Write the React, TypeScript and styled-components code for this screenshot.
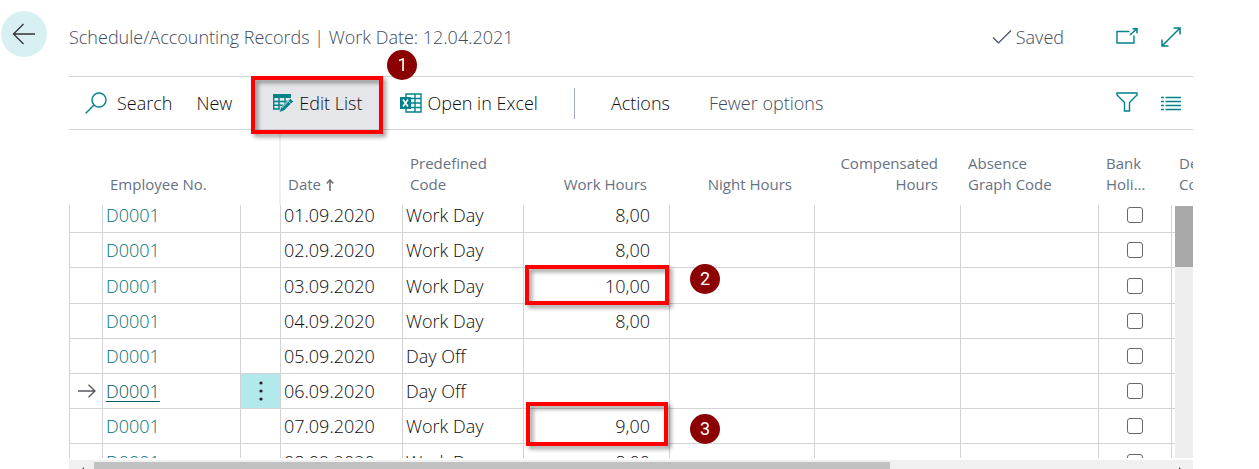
import React, { useLayoutEffect, useRef } from "react";
import styled, { createGlobalStyle, css } from "styled-components";

const teal = "#00838a";
const linkTeal = "#00757b";
const slate = "#414c5e";
const ink = "#0c0c0c";
const line = "#d2d3d8";

const GlobalStyle = createGlobalStyle`
  * { box-sizing: border-box; }
  body {
    margin: 0;
    background: #fff;
    color: ${ink};
    font-family: "Open Sans", "Noto Sans", sans-serif;
    font-size: 18px;
    font-weight: 300;
    overflow: hidden;
  }
  button {
    font: inherit;
    color: inherit;
    background: none;
    border: 0;
    padding: 0;
    cursor: pointer;
  }
  svg { display: block; flex: none; }
`;

const Page = styled.div`
  display: flex;
  height: 100vh;
  overflow: hidden;
`;

const Gutter = styled.aside`
  flex: none;
  width: 69px;
  padding: 11px 0 0 1px;
`;

const BackButton = styled.button`
  display: grid;
  place-items: center;
  width: 46px;
  height: 46px;
  border-radius: 50%;
  background: #d9f0f3;
`;

const Main = styled.main`
  flex: 1;
  min-width: 0;
  display: flex;
  flex-direction: column;
  margin: 0 66px -8px 0;
`;

const TitleBar = styled.header`
  display: flex;
  align-items: center;
  height: 76px;
  padding-bottom: 3px;
  flex: none;
  color: ${slate};
`;

const Title = styled.h1`
  flex: 1;
  margin: 0;
  font-size: 18px;
  font-weight: inherit;
  white-space: nowrap;
`;

const Saved = styled.span`
  display: flex;
  align-items: center;
  gap: 4px;
  margin-right: 52px;
`;

const IconGroup = styled.div`
  display: flex;
  align-items: center;
  gap: 23px;
  margin-right: 12px;
  color: ${teal};
`;

const Toolbar = styled.div`
  position: relative;
  z-index: 4;
  display: flex;
  align-items: center;
  flex: none;
  height: 54px;
  padding-left: 4px;
  border-top: 1px solid ${line};
  border-bottom: 1px solid ${line};
`;

const ToolButton = styled.button<{ $muted?: boolean; $active?: boolean; $gap?: number }>`
  position: relative;
  display: flex;
  align-items: center;
  gap: ${(p) => p.$gap ?? 5}px;
  height: 52px;
  padding: 0 ${(p) => (p.$active ? 21 : 12)}px;
  margin: 0 ${(p) => (p.$active ? 5 : 0)}px 0 ${(p) => (p.$active ? 7 : p.$muted ? 15 : 0)}px;
  white-space: nowrap;
  color: ${(p) => (p.$muted ? slate : ink)};
  background: ${(p) => (p.$active ? "#e5e6e9" : "none")};
  svg { color: ${teal}; }
`;

const Divider = styled.span`
  width: 1px;
  height: 31px;
  margin: 0 24px;
  background: #a2a9b4;
`;

const Spacer = styled.span`
  flex: 1;
`;

const Pane = styled.section`
  position: relative;
  flex: 1;
  min-height: 0;
  margin-bottom: 2px;
`;

const Scroller = styled.div`
  height: 100%;
  overflow: auto;
  scrollbar-width: none;
`;

const Table = styled.table`
  width: 1250px;
  min-width: 100%;
  table-layout: fixed;
  border-spacing: 0;
`;

const HeadCell = styled.th<{ $end?: boolean; $frozen?: boolean; $tight?: boolean }>`
  position: sticky;
  top: 0;
  z-index: 2;
  height: 75px;
  padding: 0 ${(p) => (p.$end ? 23 : p.$tight ? 0 : 30)}px 10px ${(p) => (p.$end ? 0 : 7)}px;
  vertical-align: bottom;
  text-align: ${(p) => (p.$end ? "right" : "left")};
  font-size: 15px;
  line-height: 21px;
  font-weight: 400;
  color: #677283;
  background: #fff;
  border-right: ${(p) => (p.$frozen ? "2px solid #f0f0f2" : "0")};
`;

const Row = styled.tr`
  --row: 35px;
  &:nth-child(5n + 3) { --row: 36px; }
`;

const Cell = styled.td<{ $end?: boolean; $center?: boolean; $menu?: boolean }>`
  position: relative;
  height: var(--row);
  padding: ${(p) => (p.$center ? "0" : p.$end ? "0 19px 0 0" : "0 0 0 3px")};
  text-align: ${(p) => (p.$end ? "right" : "left")};
  line-height: 24px;
  border-right: 1px solid ${line};
  border-bottom: 1px solid ${line};
  white-space: nowrap;
  background: ${(p) => (p.$menu ? "#b1e9ec" : "none")};
  &:first-child {
    border-left: 1px solid ${line};
    padding: 0 0 0 8px;
  }
`;

const RecordLink = styled.a<{ $current: boolean }>`
  color: ${(p) => (p.$current ? "#005a5f" : linkTeal)};
  text-decoration: ${(p) => (p.$current ? "underline" : "none")};
  text-underline-offset: 3px;
`;

const MenuButton = styled.button`
  display: block;
  margin: 0 auto;
`;

const Tick = styled.input`
  appearance: none;
  display: block;
  width: 16px;
  height: 16px;
  margin: 0 auto;
  border: 1px solid #66686c;
  border-radius: 3px;
  background: #fff;
`;

const Highlight = styled.span<{ $inset: string }>`
  position: absolute;
  z-index: 1;
  inset: ${(p) => p.$inset};
  border: 4px solid #ff0000;
  filter: drop-shadow(3px 3px 2px rgba(0, 0, 0, 0.4));
  pointer-events: none;
`;

const badgePlace = {
  toolbar: css`top: -27px; right: -34px;`,
  upper: css`top: -4px; right: -51px;`,
  lower: css`top: 5px; right: -51px;`,
};

type Place = keyof typeof badgePlace;

const Badge = styled.span<{ $place: Place }>`
  position: absolute;
  z-index: 1;
  ${(p) => badgePlace[p.$place]}
  width: 30px;
  height: 30px;
  border-radius: 50%;
  background: #8b0000;
  color: #fff;
  font: 18px/30px Roboto, sans-serif;
  text-align: center;
`;

const VerticalTrack = styled.div`
  position: absolute;
  z-index: 3;
  top: 76px;
  right: 0;
  bottom: 0;
  width: 18px;
  background: #eeeeee;
`;

const VerticalThumb = styled.div`
  height: 61px;
  background: #a9a9a9;
`;

const HorizontalTrack = styled.div`
  display: flex;
  flex: none;
  align-items: center;
  height: 17px;
  padding: 2px 8px;
  background: #f0f0f0;
  color: #505050;
`;

const HorizontalRail = styled.div`
  flex: 1;
  margin: 0 8px 0 9px;
  height: 13px;
`;

const HorizontalThumb = styled.div`
  width: 74%;
  height: 100%;
  background: #c1c1c1;
`;

const Svg = ({ w, h, children }: { w: number; h: number; children: React.ReactNode }) => (
  <svg width={w} height={h} viewBox={`0 0 ${w} ${h}`} fill="none" stroke="currentColor" strokeWidth="1.4" aria-hidden="true">
    {children}
  </svg>
);

const BackIcon = () => (
  <Svg w={24} h={22}><path d="M23 11H1.5M11.5 1L1.5 11l10 10" stroke="#333" strokeWidth="1.3" /></Svg>
);
const CheckIcon = () => (
  <Svg w={20} h={16}><path d="M1 8.5l5.5 5.5L19 1.5" strokeWidth="1.2" /></Svg>
);
const PopOutIcon = () => (
  <Svg w={22} h={18}>
    <path d="M13.5 3.5H1V15h17V7.500" />
    <path d="M14 7l6.500-6M16.500 .8h4.500v4.500" strokeWidth="1.5" />
  </Svg>
);
const ExpandIcon = () => (
  <Svg w={20} h={20}><path d="M1 19L19 1M12.5 1H19v6.500M1 12.500V19h6.500" strokeWidth="1.5" /></Svg>
);
const SearchIcon = () => (
  <Svg w={22} h={22}><circle cx="14" cy="8" r="7" /><path d="M9 13L.6 21.400" /></Svg>
);
const FilterIcon = () => (
  <Svg w={22} h={22}><path d="M1 1h20v2l-7.500 7.500V19h-5v-8.500L1 3z" /></Svg>
);
const ListIcon = () => (
  <Svg w={20} h={16}>
    <path d="M0 2.500h3M4.500 2.500H20M0 6.500h3M4.500 6.500H20M0 10.500h3M4.500 10.500H20M0 14.500h3M4.500 14.500H20" strokeWidth="1.4" />
  </Svg>
);
const EditListIcon = () => (
  <Svg w={22} h={20}>
    <path d="M1 1h18v4H1z" fill="currentColor" stroke="none" />
    <path d="M1.700 4v12H9M1 8.500h14.500M1 12.200h10M7 4v12M13 4v7" />
    <path d="M18.300 5.500l3.200 3L12 17.800 7 19.500l1.800-5z" fill="currentColor" stroke="#e5e6e9" strokeWidth=".8" />
    <path d="M16 7.800l3 3" stroke="#e5e6e9" strokeWidth=".8" />
    <path d="M9.800 15.200l7-6.800" stroke="#9fc9cc" strokeWidth=".8" />
  </Svg>
);
const ExcelIcon = () => (
  <Svg w={22} h={20}>
    <path d="M6 4.500V1h15v18H6v-3.500M11 5.500h10M11 10h10M11 14.500h10M15 1v18" />
    <path d="M0 4h11v12H0z" fill="currentColor" stroke="none" />
    <path d="M3 6.500l5 7M8 6.500l-5 7" stroke="#fff" strokeWidth="1.600" />
  </Svg>
);
const SortIcon = () => (
  <Svg w={8} h={12}><path d="M4 12V1M.7 4.500L4 1l3.300 3.500" stroke="#76787c" strokeWidth="1.700" /></Svg>
);
const RowArrowIcon = () => (
  <Svg w={18} h={14}><path d="M0 7h17M10.500 .700L17 7l-6.500 6.300" stroke="#55585c" strokeWidth="1.300" /></Svg>
);
const DotsIcon = () => (
  <Svg w={4} h={20}>
    <g fill="#222" stroke="none"><circle cx="2" cy="2" r="1.600" /><circle cx="2" cy="10" r="1.600" /><circle cx="2" cy="18" r="1.600" /></g>
  </Svg>
);
const ScrollArrow = ({ flip }: { flip?: boolean }) => (
  <Svg w={8} h={13}>
    <path d={flip ? "M2 5l4 4-4 4z" : "M7 5L3 9l4 4z"} fill="currentColor" stroke="none" />
  </Svg>
);

const SortLabel = styled.span`
  display: inline-flex;
  align-items: center;
  gap: 5px;
`;

const columnWidths = [34, 138, 40, 122, 121, 146, 145, 146, 138, 73];

interface Entry {
  date: string;
  code: string;
  hours: string;
  current?: boolean;
  note?: { label: number; inset: string; place: Place };
}

const rows: Entry[] = [
  { date: "01.09.2020", code: "Work Day", hours: "8,00" },
  { date: "02.09.2020", code: "Work Day", hours: "8,00" },
  { date: "03.09.2020", code: "Work Day", hours: "10,00", note: { label: 2, inset: "-3px 0 -2px 1px", place: "upper" } },
  { date: "04.09.2020", code: "Work Day", hours: "8,00" },
  { date: "05.09.2020", code: "Day Off", hours: "" },
  { date: "06.09.2020", code: "Day Off", hours: "", current: true },
  { date: "07.09.2020", code: "Work Day", hours: "9,00", note: { label: 3, inset: "-7px 1px -3px 2px", place: "lower" } },
  { date: "08.09.2020", code: "Work Day", hours: "8,00" },
  { date: "09.09.2020", code: "Work Day", hours: "8,00" },
];

export default function App() {
  const scroller = useRef<HTMLDivElement>(null);
  useLayoutEffect(() => {
    if (scroller.current) scroller.current.scrollTop = 7;
  }, []);

  return (
    <Page>
      <GlobalStyle />
      <Gutter>
        <BackButton aria-label="Back"><BackIcon /></BackButton>
      </Gutter>
      <Main>
        <TitleBar>
          <Title>Schedule/Accounting Records | Work Date: 12.04.2021</Title>
          <Saved><CheckIcon />Saved</Saved>
          <IconGroup>
            <button aria-label="Open in new window"><PopOutIcon /></button>
            <button aria-label="Expand"><ExpandIcon /></button>
          </IconGroup>
        </TitleBar>
        <Toolbar>
          <ToolButton $gap={10}><SearchIcon />Search</ToolButton>
          <ToolButton>New</ToolButton>
          <ToolButton $active>
            <EditListIcon />Edit List
            <Highlight $inset="-1px 0 -5px 0" />
            <Badge $place="toolbar">1</Badge>
          </ToolButton>
          <ToolButton><ExcelIcon />Open in Excel</ToolButton>
          <Divider />
          <ToolButton>Actions</ToolButton>
          <ToolButton $muted>Fewer options</ToolButton>
          <Spacer />
          <IconGroup>
            <button aria-label="Filter"><FilterIcon /></button>
            <button aria-label="List view"><ListIcon /></button>
          </IconGroup>
        </Toolbar>
        <Pane>
          <Scroller ref={scroller}>
            <Table>
              <colgroup>
                {columnWidths.map((w, i) => <col key={i} style={{ width: w }} />)}
                <col />
              </colgroup>
              <thead>
                <tr>
                  <HeadCell aria-label="Current row" />
                  <HeadCell>Employee No.</HeadCell>
                  <HeadCell $frozen aria-label="Row menu" />
                  <HeadCell><SortLabel>Date<SortIcon /></SortLabel></HeadCell>
                  <HeadCell>Predefined Code</HeadCell>
                  <HeadCell $end>Work Hours</HeadCell>
                  <HeadCell $end>Night Hours</HeadCell>
                  <HeadCell $end>Compensated Hours</HeadCell>
                  <HeadCell>Absence Graph Code</HeadCell>
                  <HeadCell $tight>Bank<br />Holi...</HeadCell>
                  <HeadCell $tight>De<br />Co</HeadCell>
                </tr>
              </thead>
              <tbody>
                {rows.map((r) => (
                  <Row key={r.date}>
                    <Cell>{r.current && <RowArrowIcon />}</Cell>
                    <Cell><RecordLink href="#" $current={!!r.current}>D0001</RecordLink></Cell>
                    <Cell $center $menu={r.current}>
                      {r.current && <MenuButton aria-label="Show more options"><DotsIcon /></MenuButton>}
                    </Cell>
                    <Cell>{r.date}</Cell>
                    <Cell>{r.code}</Cell>
                    <Cell $end>
                      {r.hours}
                      {r.note && <Highlight $inset={r.note.inset} />}
                      {r.note && <Badge $place={r.note.place}>{r.note.label}</Badge>}
                    </Cell>
                    <Cell />
                    <Cell />
                    <Cell />
                    <Cell $center><Tick type="checkbox" aria-label={`Bank Holiday ${r.date}`} /></Cell>
                    <Cell />
                  </Row>
                ))}
              </tbody>
            </Table>
          </Scroller>
          <VerticalTrack><VerticalThumb /></VerticalTrack>
        </Pane>
        <HorizontalTrack>
          <ScrollArrow />
          <HorizontalRail><HorizontalThumb /></HorizontalRail>
          <ScrollArrow flip />
        </HorizontalTrack>
      </Main>
    </Page>
  );
}
